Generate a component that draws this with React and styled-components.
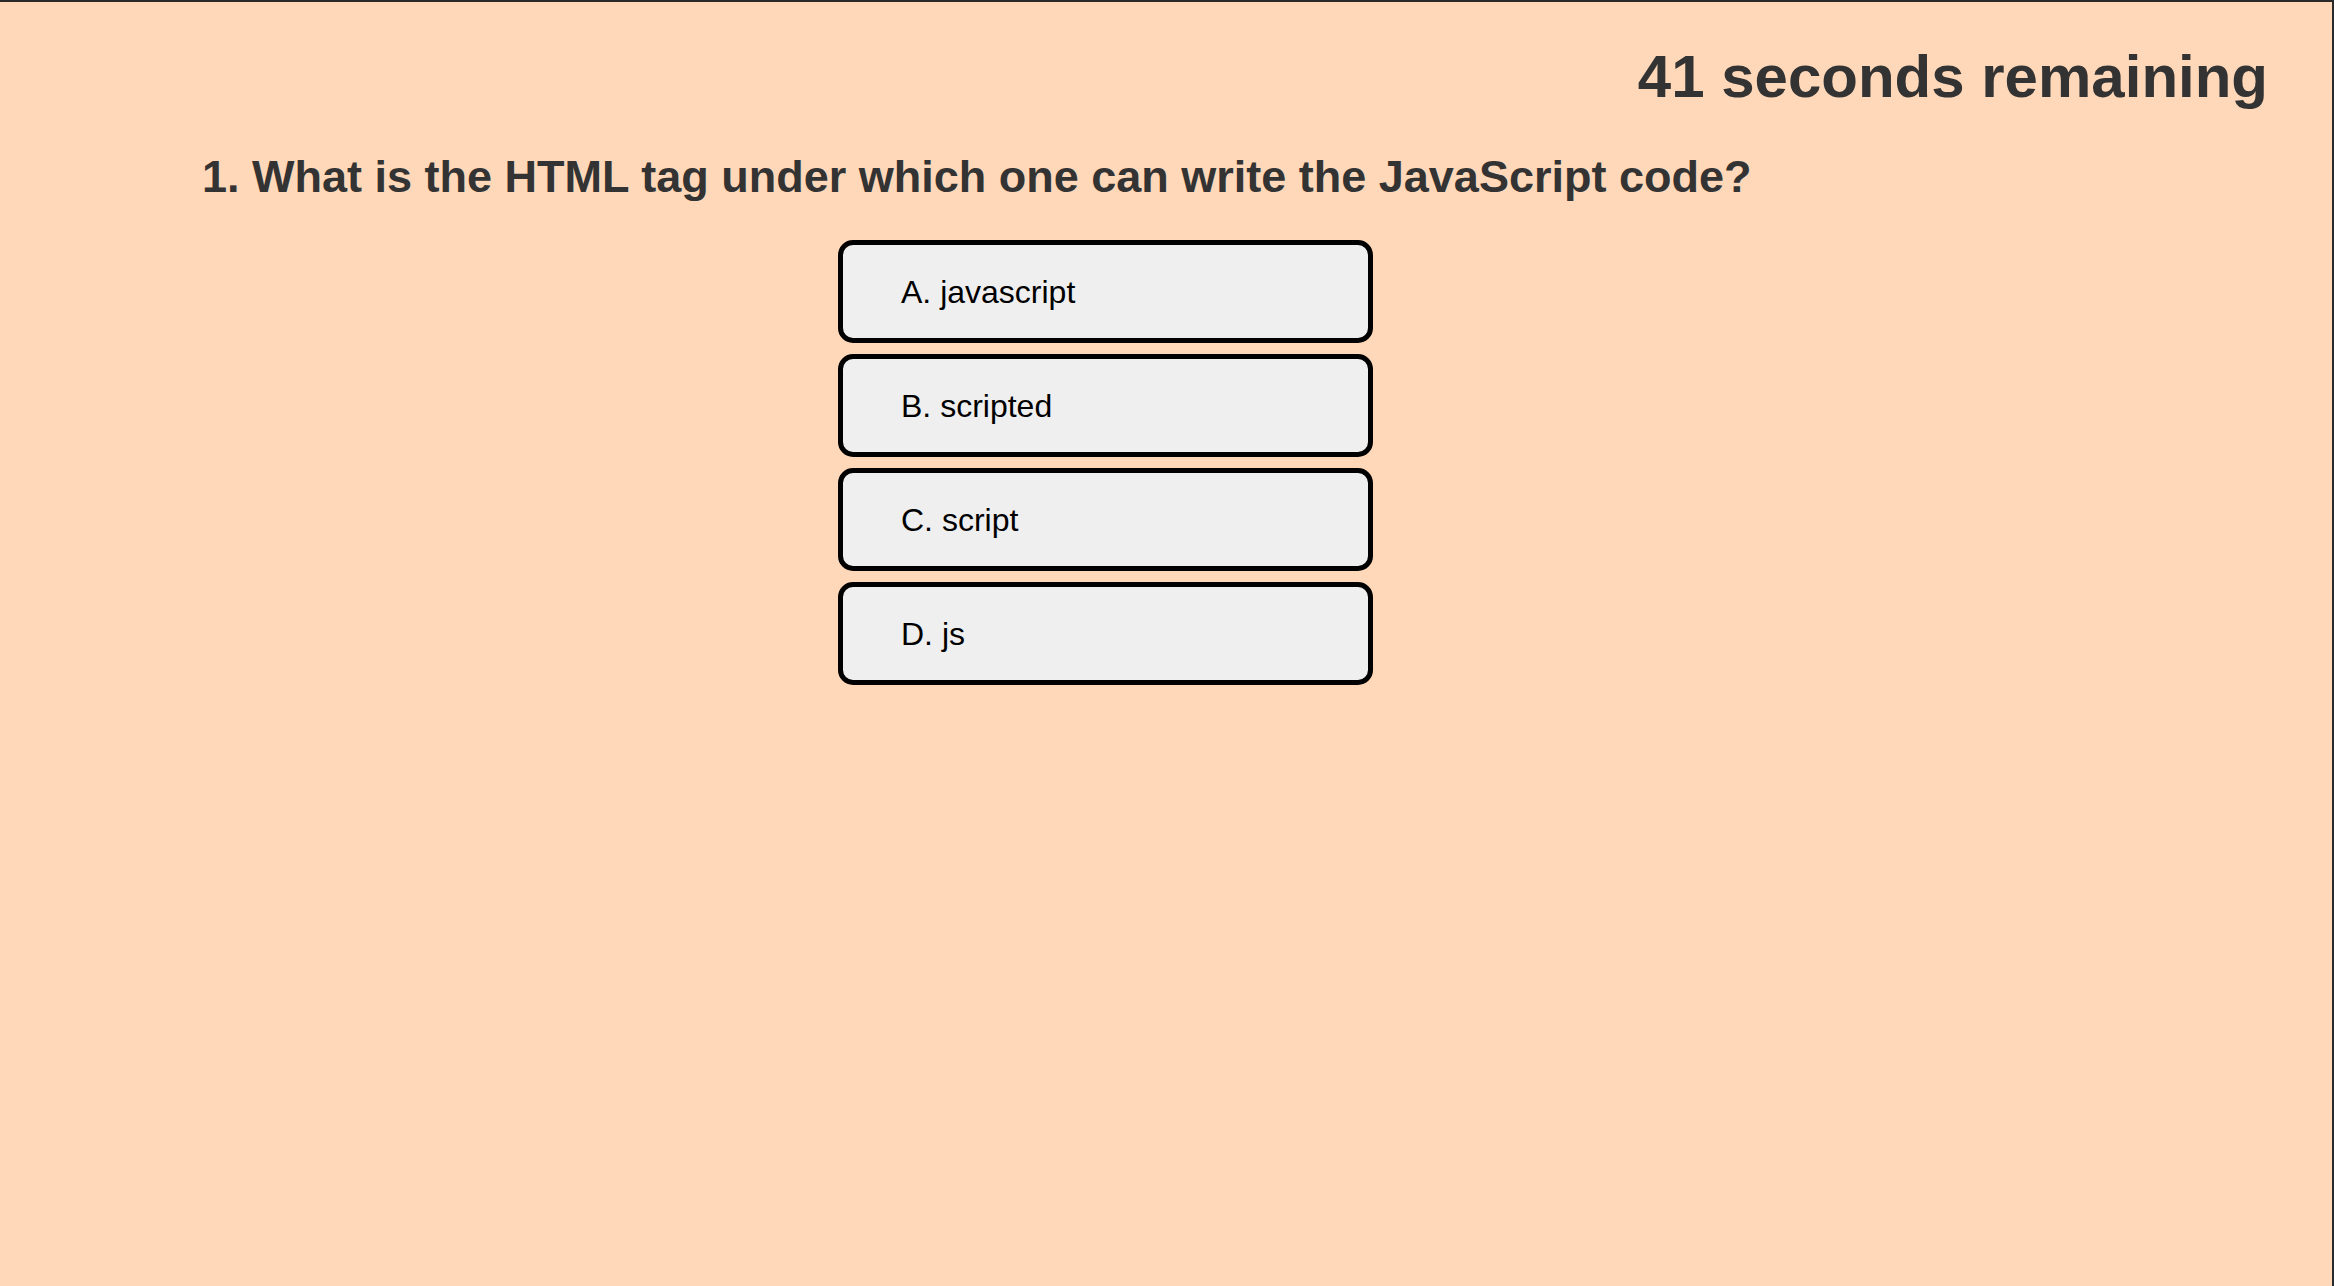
import React from "react";
import styled, { createGlobalStyle } from "styled-components";

const Global = createGlobalStyle`
  html, body { margin: 0; padding: 0; }
  body {
    background: #ffd8b9;
    font-family: "Liberation Sans", Arial, Helvetica, sans-serif;
  }
`;

const Page = styled.div`
  box-sizing: border-box;
  width: 2334px;
  height: 1286px;
  background: #ffd8b9;
  border-top: 2px solid #2a2a2a;
  border-right: 2px solid #2a2a2a;
  display: flex;
  flex-direction: column;
  color: #333333;
`;

const Header = styled.div`
  display: flex;
  justify-content: flex-end;
  padding: 45px 64px 0 0;
`;

const Timer = styled.div`
  font-size: 60px;
  font-weight: 700;
  line-height: 1;
`;

const Question = styled.h2`
  margin: 47px 0 0 202px;
  font-size: 45px;
  font-weight: 700;
  line-height: 1;
`;

const Options = styled.div`
  display: flex;
  flex-direction: column;
  gap: 11px;
  margin: 41px 0 0 838px;
  width: 535px;
`;

const Option = styled.button`
  box-sizing: border-box;
  height: 103px;
  width: 100%;
  padding: 0 0 0 58px;
  border: 5px solid #000;
  border-radius: 15px;
  background: #efefef;
  color: #000;
  font-family: "Liberation Sans", Arial, Helvetica, sans-serif;
  font-size: 32px;
  line-height: 1;
  text-align: left;
  cursor: pointer;
`;

const options = ["A. javascript", "B. scripted", "C. script", "D. js"];

export default function App() {
  return (
    <>
      <Global />
      <Page>
        <Header>
          <Timer>41 seconds remaining</Timer>
        </Header>
        <Question>
          1. What is the HTML tag under which one can write the JavaScript code?
        </Question>
        <Options>
          {options.map((o) => (
            <Option key={o}>{o}</Option>
          ))}
        </Options>
      </Page>
    </>
  );
}
